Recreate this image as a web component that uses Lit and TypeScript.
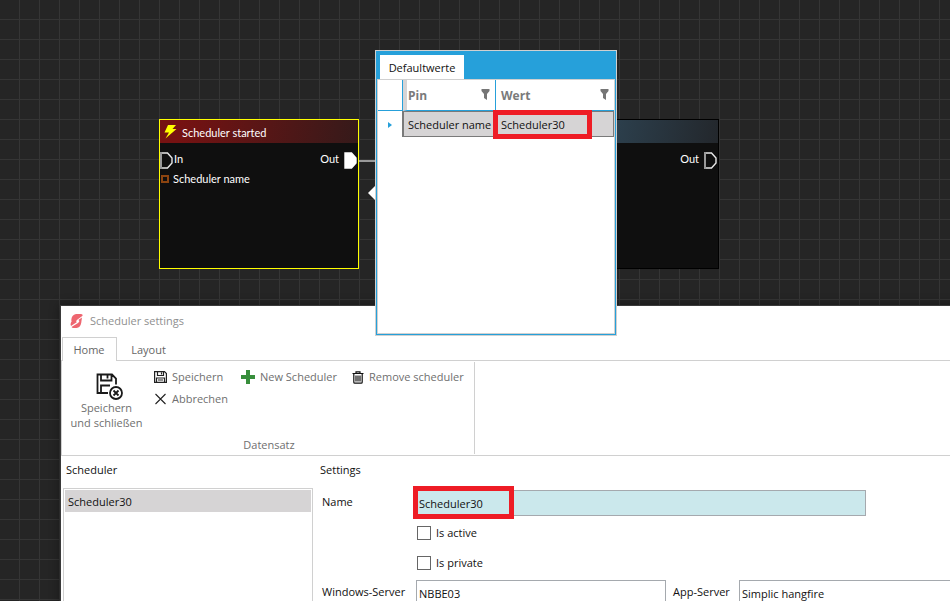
import { LitElement, html, css, svg } from "lit";
import { customElement, property } from "lit/decorators.js";
import { classMap } from "lit/directives/class-map.js";

const pin = (filled: boolean) => html`<svg class="pin" width="13" height="17" viewBox="0 0 13 17">
  <path d="M1 1H7.500L12 6V11L7.500 16H1Z" fill=${filled ? "#fff" : "none"} stroke=${filled ? "#fff" : "#e8e8e8"} stroke-width="1.400" />
  ${filled ? "" : svg`<path d="M1 0V17" stroke="#999" stroke-width="2" />`}
</svg>`;

const funnel = html`<svg width="9" height="12" viewBox="0 0 9 12"><path d="M.5 0H8.500V2L6 5V11L3 9V5L.5 2Z" fill="#767676" /></svg>`;

/** A node on the workflow canvas. */
@customElement("flow-node")
export class FlowNode extends LitElement {
  @property() caption = "";
  @property({ type: Boolean }) start = false;

  static styles = css`
    :host { display: block; font-family: Lato, "Open Sans", sans-serif; font-size: 11px; }
    .node { box-sizing: border-box; width: 200px; height: 150px; border: 1px solid #000; background: #0f0f0f; color: #fff; }
    .node.start { border-color: #ffff00; }
    .head { display: flex; align-items: center; gap: 4px; height: 23px; padding-left: 4px; background: linear-gradient(100deg, #34556a, #23272c); }
    .start .head { background: linear-gradient(100deg, #761212 10%, #351a1a); }
    .head .label { padding-top: 2px; }
    .row { display: flex; align-items: center; height: 20px; }
    .first { margin-top: 6px; }
    .first svg { margin-top: 3px; }
    .label { margin-left: 1px; }
    .out { margin-left: auto; padding-right: 5px; }
    .first .pin:last-child { margin-right: 1px; }
    .square { box-sizing: border-box; width: 8px; height: 8px; margin: 0 4px 0 1px; border: 2px solid #8c4410; }
  `;

  render() {
    return html`<div class=${classMap({ node: true, start: this.start })}>
      <div class="head">
        ${this.start
          ? html`<svg width="13" height="15" viewBox="0 0 13 15"><path d="M4 1H12L8.500 5H12.500L1.500 14.500L5 8.500H0.500Z" fill="#ffff00" /></svg>`
          : ""}
        <span class="label">${this.caption}</span>
      </div>
      <div class="row first">
        ${this.start ? html`${pin(false)}<span class="label">In</span>` : ""}
        <span class="out">Out</span>${pin(this.start)}
      </div>
      ${this.start ? html`<div class="row"><span class="square"></span><span>Scheduler name</span></div>` : ""}
    </div>`;
  }
}

/** Popup that lists the default values of the selected node. */
@customElement("defaults-popup")
export class DefaultsPopup extends LitElement {
  static styles = css`
    :host { display: block; }
    .popup { box-sizing: border-box; position: relative; height: 286px; border: 1px solid #d0d0d0; background: #fff; }
    .arrow { position: absolute; left: -8px; top: 135px; width: 7px; height: 14px; background: #fff; clip-path: polygon(100% 0, 100% 100%, 0 50%); }
    .inner { box-sizing: border-box; display: flex; flex-direction: column; height: 100%; border: 1px solid #26a0da; border-top: 0; }
    .tabs { height: 28px; padding: 4px 0 0 3px; box-sizing: border-box; background: #26a0da; }
    .tab { display: block; height: 24px; width: 84px; padding: 2px 0 0; border: 0; background: #fff; color: #111; font: inherit; }
    .sheet { flex: 1; border: 1px solid #d0d0d0; }
    table { width: 100%; border-collapse: separate; border-spacing: 0; table-layout: fixed; }
    th, td { box-sizing: border-box; padding: 0; text-align: left; white-space: nowrap; }
    th { height: 31px; padding-top: 2px; border-bottom: 1px solid #26a0da; color: #7a7a7a; font-size: 12px; font-weight: 700; }
    th:nth-child(-n + 2) { border-right: 1px solid #26a0da; }
    th:nth-child(2) { border-left: 4px solid #d6d4d5; }
    .mark { width: 25px; }
    .pin { width: 93px; }
    .head { display: flex; align-items: center; justify-content: space-between; padding: 0 5px; }
    .head svg { margin-bottom: 2px; }
    th:nth-child(2) .head { padding-left: 1px; }
    td { height: 26px; padding: 2px 0 0 4px; background: #d6d4d5; border: solid #7a7a7a; border-width: 1px 0; }
    td:first-child { background: #fff; border-width: 0 1px 0 0; padding-left: 10px; }
    td:nth-child(2) { border-left-width: 1px; }
    td:last-child { border-right-width: 1px; padding-left: 5px; }
    .caret { display: block; width: 4px; height: 6px; background: #26a0da; clip-path: polygon(0 0, 100% 50%, 0 100%); }
    .highlight { position: absolute; box-sizing: border-box; left: 117px; top: 59px; width: 99px; height: 29px; border: 5px solid #ee1c25; pointer-events: none; }
  `;

  render() {
    return html`<div class="popup">
      <div class="arrow"></div>
      <div class="inner">
        <div class="tabs"><button class="tab">Defaultwerte</button></div>
        <div class="sheet">
          <table>
            <thead><tr>
              <th class="mark"></th>
              <th class="pin"><div class="head">Pin ${funnel}</div></th>
              <th><div class="head">Wert ${funnel}</div></th>
            </tr></thead>
            <tbody><tr><td><span class="caret"></span></td><td>Scheduler name</td><td>Scheduler30</td></tr></tbody>
          </table>
        </div>
      </div>
      <div class="highlight"></div>
    </div>`;
  }
}

/** Settings window with its ribbon and form. */
@customElement("settings-window")
export class SettingsWindow extends LitElement {
  static styles = css`
    :host { display: block; }
    .window { box-sizing: border-box; display: flex; flex-direction: column; height: 100%; border: 1px solid #3a3a3a; background: #fff; color: #111; box-shadow: 0 0 10px rgba(0, 0, 0, 0.4); }
    button { display: flex; align-items: center; padding: 0; border: 0; background: none; color: #6f6f6f; font: inherit; white-space: nowrap; }
    .title { box-sizing: border-box; display: flex; align-items: center; gap: 7px; height: 31px; padding: 0 0 2px 9px; color: #8f8f8f; }
    .tabs { display: flex; height: 24px; box-sizing: border-box; padding-left: 1px; border-bottom: 1px solid #d0d0d0; }
    .tab { box-sizing: border-box; height: 24px; justify-content: center; width: 63px; padding-top: 1px; color: #666; }
    .tab.on { width: 55px; border: 1px solid #d0d0d0; border-bottom: 0; padding: 0 1px 0 0; background: #fff; }
    .ribbon { display: flex; height: 95px; padding-top: 1px; box-sizing: border-box; border-bottom: 1px solid #d0d0d0; border-left: 1px solid #d0d0d0; }
    .group { box-sizing: border-box; display: flex; flex-direction: column; justify-content: space-between; width: 413px; height: 92px; border-right: 1px solid #d0d0d0; }
    .tools { display: flex; padding: 4px 0 0 8px; }
    .big { flex-direction: column; width: 73px; padding-top: 7px; line-height: 15px; }
    .big svg { margin: 0 0 0 5px; }
    .small { display: grid; grid-template-columns: 87px 111px 120px; grid-auto-rows: 22px; margin-left: 11px; }
    .small button { gap: 5px; }
    .caption { text-align: center; padding: 0 0 1px 2px; color: #6f6f6f; line-height: 16px; }
    .body { display: grid; grid-template-columns: 252px 1fr; flex: 1; min-height: 0; padding-top: 4px; }
    .side, .main { display: flex; flex-direction: column; }
    h2 { margin: 0; padding-left: 5px; font-size: 11px; font-weight: 400; line-height: 20px; }
    .main h2 { padding-left: 7px; }
    .list { flex: 1; margin: 8px 0 0 2px; padding: 1px; border: 1px solid #d0d0d0; list-style: none; }
    .item { height: 22px; line-height: 23px; padding-left: 3px; background: #d6d4d5; }
    form { display: grid; grid-template-columns: 94px 250px 73px 1fr; grid-auto-rows: 30px; align-items: center; margin-top: 8px; padding-left: 9px; }
    .caption-text { padding-bottom: 2px; }
    .field { position: relative; height: 28px; margin-top: 2px; }
    .name { grid-column: span 3; width: 450px; }
    input.text { box-sizing: border-box; display: block; width: 100%; height: 26px; padding: 1px 2px; border: 1px solid #a5a9ae; border-radius: 0; background: #fff; color: #111; font: inherit; outline: 0; }
    .name input.text { background: #cbe8ec; }
    .check { grid-column: 2 / -1; display: flex; align-items: center; gap: 5px; padding-left: 1px; }
    .check input { appearance: none; box-sizing: border-box; width: 14px; height: 14px; margin: 0; border: 1px solid #666; background: #fff; }
    .app { padding-left: 7px; }
    .highlight { position: absolute; box-sizing: border-box; left: -3px; top: -4px; width: 101px; height: 33px; border: 5px solid #ee1c25; pointer-events: none; }
  `;

  render() {
    return html`<div class="window">
      <div class="title">
        <svg width="13" height="14" viewBox="0 0 13 14">
          <path d="M6 0H11Q13 0 12.600 1.800L7.500 5.500Q5 7.500 7 8L1 12Q0 10 1 8.500Q2 7.500 1.300 6Q1.500 1 6 0Z" fill="#ee6670" />
          <path d="M12 3.500L8.300 6Q10.500 7 8 9L1.500 13Q2 14 3.500 14H6.500Q10.500 13.500 11.300 8.500Q11.500 6.500 12 3.500Z" fill="#ee6670" />
        </svg>
        <span>Scheduler settings</span>
      </div>
      <div class="tabs"><button class="tab on">Home</button><button class="tab">Layout</button></div>
      <div class="ribbon">
        <div class="group">
          <div class="tools">
            <button class="big">
              <svg width="27" height="27" viewBox="0 0 27 27" fill="none" stroke="#1a1a1a" stroke-width="1.800">
                <path d="M12 20H1.500V1.500H16L20 5.500V11.500M5 1.500V7.500H15.500V1.500M11.500 2.500V5.500M5 20V12.500H14" />
                <circle cx="20" cy="20" r="6" /><path d="M17.500 17.500L22.500 22.500M22.500 17.500L17.500 22.500" />
              </svg>
              <span>Speichern<br />und schließen</span>
            </button>
            <div class="small">
              <button>
                <svg width="13" height="13" viewBox="0 0 13 13" fill="none" stroke="#222" stroke-width="1.200"><path d="M1.600 .6H10.500L12.400 2.500V11.400H.6V.6ZM3.500 1V4.500H9.500V1M7.500 1.500V3.500M2.500 11V7H10.500V11M4 9H9" /></svg>
                Speichern
              </button>
              <button>
                <svg width="14" height="14" viewBox="0 0 14 14"><path d="M5 0H9V5H14V9H9V14H5V9H0V5H5Z" fill="#388e3c" /></svg>
                New Scheduler
              </button>
              <button>
                <svg width="12" height="13" viewBox="0 0 12 13" fill="none" stroke="#111" stroke-width="1.200"><path d="M.5 2.500H11.500M4 2.500V.8H8V2.500M1.800 2.500V11.200Q1.800 12.200 2.800 12.200H9.200Q10.200 12.200 10.200 11.200V2.500M4 4.500V10.500M6 4.500V10.500M8 4.500V10.500" /></svg>
                Remove scheduler
              </button>
              <button>
                <svg width="13" height="12" viewBox="0 0 13 12"><path d="M1.500 1L11.500 11M11.500 1L1.500 11" stroke="#222" stroke-width="1.100" /></svg>
                Abbrechen
              </button>
            </div>
          </div>
          <div class="caption">Datensatz</div>
        </div>
      </div>
      <div class="body">
        <div class="side">
          <h2>Scheduler</h2>
          <ul class="list"><li class="item">Scheduler30</li></ul>
        </div>
        <div class="main">
          <h2>Settings</h2>
          <form>
            <label class="caption-text" for="name">Name</label>
            <div class="field name"><input class="text" id="name" .value=${"Scheduler30"} /><div class="highlight"></div></div>
            <label class="check"><input type="checkbox" />Is active</label>
            <label class="check"><input type="checkbox" />Is private</label>
            <label class="caption-text" for="server">Windows-Server</label>
            <div class="field"><input class="text" id="server" .value=${"NBBE03"} /></div>
            <label class="caption-text app" for="app">App-Server</label>
            <div class="field"><input class="text" id="app" .value=${"Simplic hangfire"} /></div>
          </form>
        </div>
      </div>
    </div>`;
  }
}

@customElement("app-root")
export class AppRoot extends LitElement {
  static styles = css`
    :host {
      display: block; position: relative; height: 100vh; min-height: 600px; overflow: hidden;
      background: repeating-linear-gradient(90deg, transparent 0 19px, #353535 19px 20px), repeating-linear-gradient(transparent 0 19px, #353535 19px 20px), #252525;
      font-family: "Open Sans", "Noto Sans", sans-serif; font-size: 11px; line-height: 16px; color: #111;
    }
    .start, .next, .wire, .defaults, .settings { position: absolute; }
    .start { left: 159px; top: 119px; }
    .next { left: 519px; top: 119px; }
    .wire { left: 359px; top: 160px; width: 160px; height: 2px; background: #999; }
    .settings { display: grid; left: 60px; right: -40px; top: 305px; bottom: -40px; }
    .defaults { left: 375px; top: 50px; width: 242px; }
  `;

  render() {
    return html`
      <div class="wire"></div>
      <flow-node class="start" start caption="Scheduler started"></flow-node>
      <flow-node class="next"></flow-node>
      <settings-window class="settings"></settings-window>
      <defaults-popup class="defaults"></defaults-popup>
    `;
  }
}
